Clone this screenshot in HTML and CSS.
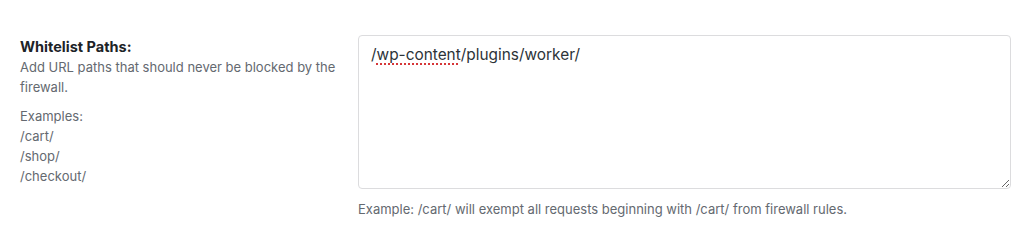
FILE: index.html
```html
<!DOCTYPE html>
<html lang="en">
<head>
<meta charset="utf-8">
<title>Whitelist Paths</title>
<link rel="stylesheet" href="styles.css">
</head>
<body>
<div class="setting-row">
  <div class="setting-label">
    <div class="setting-title">Whitelist Paths:</div>
    <p class="setting-desc">Add URL paths that should never be blocked by the firewall.</p>
    <p class="setting-desc">Examples:<br>/cart/<br>/shop/<br>/checkout/</p>
  </div>
  <div class="setting-field">
    <div class="textarea" role="textbox" aria-multiline="true"><span class="slash">/</span><span class="misspelled">wp-content</span>/plugins/worker/</div>
    <p class="field-hint">Example: /cart/ will exempt all requests beginning with /cart/ from firewall rules.</p>
  </div>
</div>
</body>
</html>
```

FILE: styles.css
```css
html, body {
  margin: 0;
  padding: 0;
  background: #ffffff;
}
body {
  font-family: Inter, "Liberation Sans", Arial, sans-serif;
  color: #1d2327;
}
.setting-row {
  display: flex;
  padding: 35px 13px 0 20px;
}
.setting-label {
  width: 338px;
  flex: none;
  padding-top: 2px;
}
.setting-title {
  font-size: 14.5px;
  font-weight: 700;
  line-height: 20px;
  color: #1d2327;
}
.setting-desc {
  margin: 0 0 9px;
  font-size: 13px;
  line-height: 20px;
  color: #646970;
  padding-right: 10px;
}
.setting-field {
  flex: 1;
  display: flex;
  flex-direction: column;
}
.textarea {
  box-sizing: border-box;
  height: 154px;
  border: 1px solid #dcdcde;
  border-radius: 4px;
  padding: 7px 12px;
  font-size: 15.4px;
  line-height: 24px;
  color: #2c3338;
  resize: both;
  overflow: auto;
}
.misspelled {
  text-decoration: underline dotted #d63638;
  text-decoration-thickness: 2px;
  text-underline-offset: 3px;
}
.field-hint {
  margin: 10px 0 0;
  font-size: 13px;
  line-height: 20px;
  color: #646970;
}
```
